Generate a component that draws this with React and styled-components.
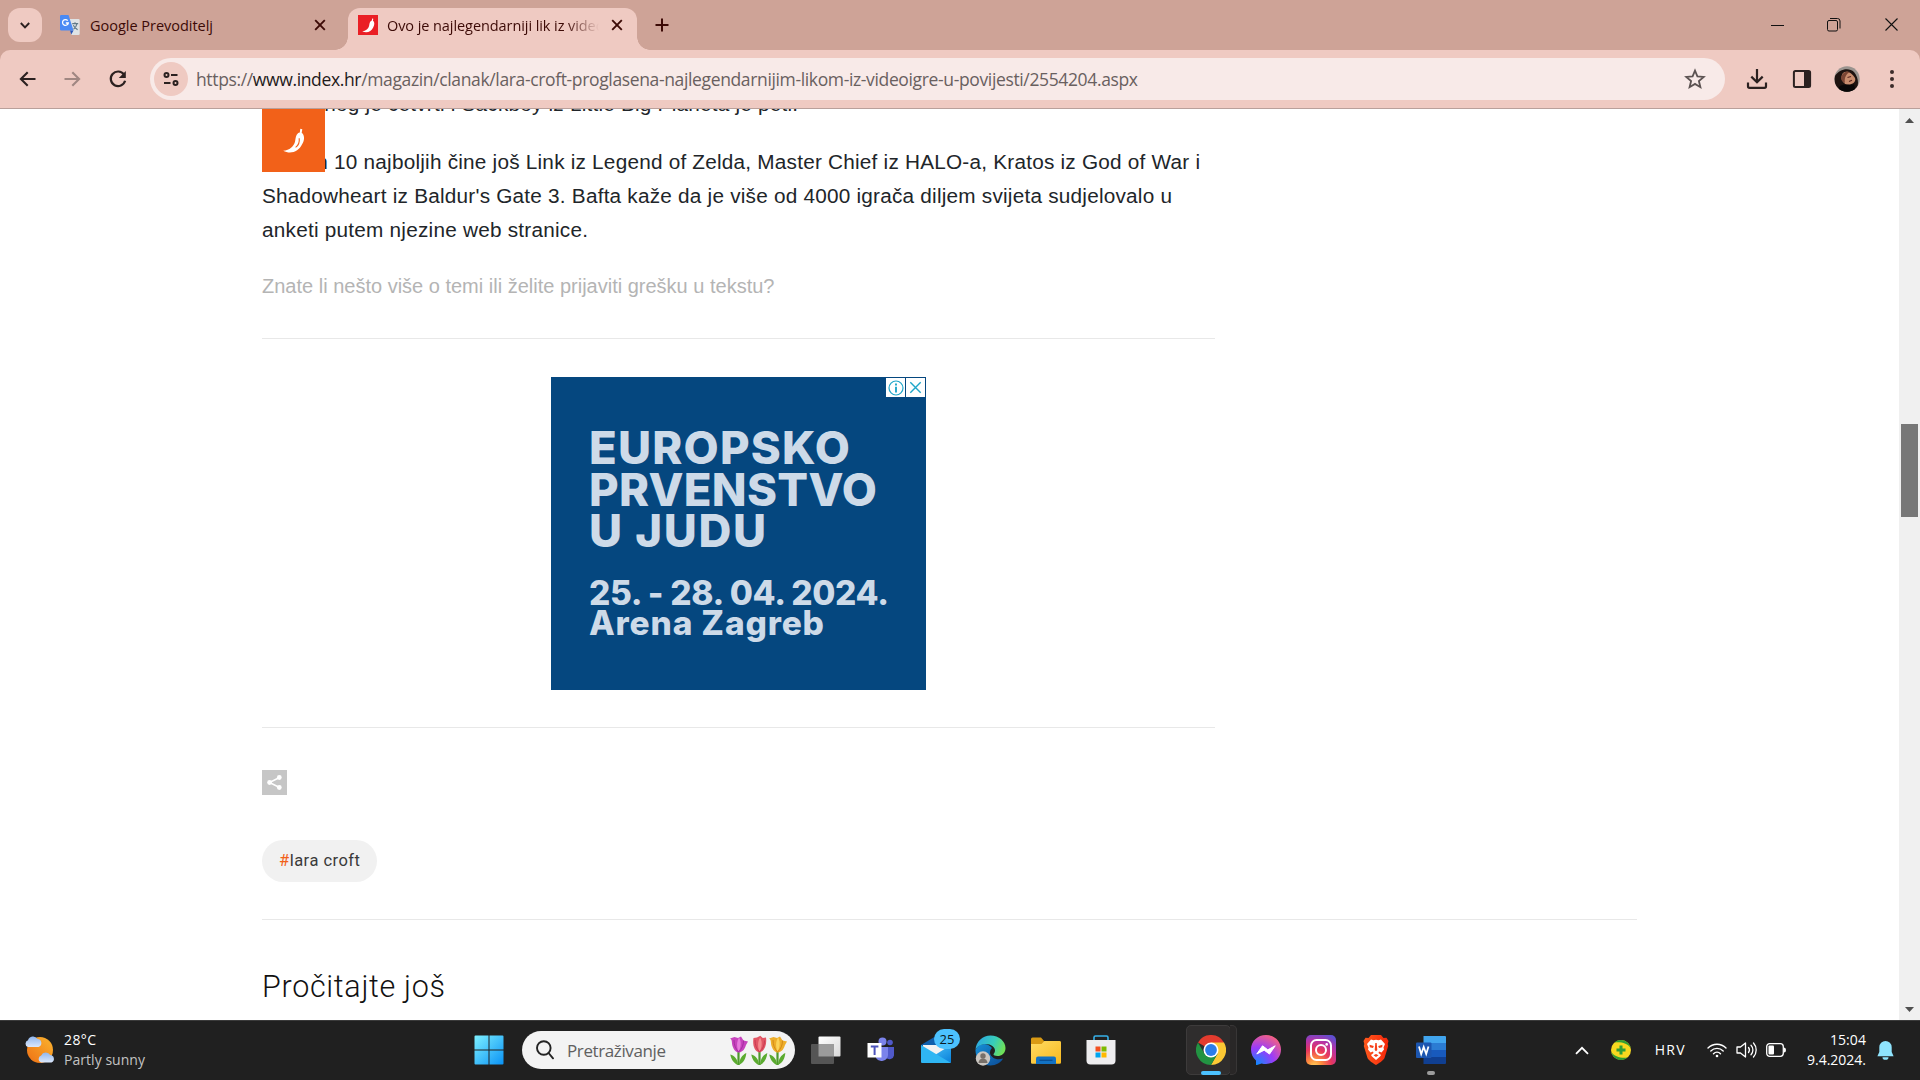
import React, { useLayoutEffect, useRef, useState } from 'react';
import styled, { createGlobalStyle, css } from 'styled-components';

const ui = '"Open Sans", "Noto Sans", sans-serif';

const GlobalStyle = createGlobalStyle`
  *, *::before, *::after { box-sizing: border-box; }
  html, body { margin: 0; padding: 0; overflow: hidden; background: #fff; }
  svg { display: block; flex: none; }
`;

/* ---------- text tracked to a known measure ---------- */
const FitSpan = styled.span`
  display: inline-block;
  white-space: pre;
  flex: none;
`;

function Fit({ width, children }) {
  const ref = useRef(null);
  const [spacing, setSpacing] = useState(null);
  useLayoutEffect(() => {
    const el = ref.current;
    const count = el.textContent.length;
    setSpacing((width - el.getBoundingClientRect().width) / Math.max(1, count - 1));
  }, [width]);
  return (
    <FitSpan ref={ref} style={spacing === null ? undefined : { letterSpacing: `${spacing}px` }}>
      {children}
    </FitSpan>
  );
}

/* ---------- window ---------- */
const Window = styled.div`
  width: 1920px;
  height: 1080px;
  display: flex;
  flex-direction: column;
  overflow: hidden;
  background: #fff;
`;

const TabStrip = styled.header`
  height: 50px;
  flex: none;
  display: flex;
  align-items: flex-start;
  padding: 8px 0 0 8px;
  background: #cea397;
  color: #3c0a06;
  font: 400 14.5px/20px ${ui};
`;

const TabSearch = styled.button`
  width: 34px;
  height: 34px;
  border: 0;
  padding: 0;
  border-radius: 12px;
  background: #efcac2;
  display: grid;
  place-items: center;
`;

const Tab = styled.div`
  position: relative;
  height: 42px;
  display: flex;
  align-items: center;
  padding-bottom: 8px;
  ${(p) =>
    p.$active
      ? css`
          width: 289px;
          padding-left: 10px;
          padding-right: 14px;
          border-radius: 12px 12px 0 0;
          background: #efcac2;
          &::before,
          &::after {
            content: '';
            position: absolute;
            bottom: 0;
            width: 13px;
            height: 13px;
          }
          &::before {
            left: -13px;
            background: radial-gradient(circle at 0 0, transparent 12.5px, #efcac2 13px);
          }
          &::after {
            right: -13px;
            background: radial-gradient(circle at 100% 0, transparent 12.5px, #efcac2 13px);
          }
        `
      : css`
          width: 306px;
          padding-left: 18px;
          padding-right: 22px;
        `}
`;

const TabTitle = styled.span`
  flex: 1;
  overflow: hidden;
  margin: 0 8px 0 ${(p) => p.$gap}px;
  padding-top: 1px;
  ${(p) =>
    p.$fade &&
    css`
      mask-image: linear-gradient(to right, #000 178px, transparent 212px);
    `}
`;

const NewTab = styled.span`
  height: 34px;
  display: flex;
  align-items: center;
  margin-left: 18px;
`;

const WindowControls = styled.div`
  margin-left: auto;
  height: 33px;
  display: flex;
  align-items: center;
  gap: 43px;
  padding-right: 21px;
`;

const ToolbarBack = styled.div`
  background: #cea397;
  flex: none;
`;

const Toolbar = styled.div`
  height: 59px;
  display: flex;
  align-items: center;
  border-radius: 10px 10px 0 0;
  border-bottom: 1px solid #b9a09b;
  background: #efcac2;
  padding-left: 17px;
`;

const NavButtons = styled.nav`
  display: flex;
  flex: none;
  gap: 23px;
  width: 133px;
`;

const Omnibox = styled.div`
  flex: none;
  width: 1575px;
  height: 42px;
  border-radius: 21px;
  background: #f8eae8;
  display: flex;
  align-items: center;
  padding: 0 19px 0 4px;
  color: #69605f;
  font: 400 17.5px/24px ${ui};
`;

const SiteInfo = styled.span`
  width: 34px;
  height: 34px;
  border-radius: 50%;
  background: #efcac2;
  display: grid;
  place-items: center;
  margin-right: 8px;
`;

const Host = styled.b`
  font-weight: 400;
  color: #1f1a1a;
`;

const Address = styled.span`
  flex: 1;
  white-space: nowrap;
`;

const ToolbarActions = styled.div`
  display: grid;
  grid-template-columns: repeat(4, 45px);
  place-items: center;
  padding-left: 9.5px;
`;

/* ---------- page ---------- */
const Viewport = styled.main`
  flex: 1;
  min-height: 0;
  display: flex;
  overflow: hidden;
`;

const Page = styled.div`
  position: relative;
  flex: 1;
  overflow: hidden;
  padding-left: 262px;
  background: #fff;
`;

const LogoBadge = styled.div`
  position: absolute;
  left: 262px;
  top: 0;
  width: 63px;
  height: 63px;
  background: #f26119;
  display: grid;
  place-items: center;
`;

const Article = styled.article`
  width: 953px;
  margin-top: -22px;
  font: 400 20.75px/34px "Liberation Sans", Arial, sans-serif;
  color: #212529;
`;

const Paragraph = styled.p`
  margin: 0 0 24px;
  display: flex;
  flex-direction: column;
  align-items: flex-start;
`;

const Question = styled.p`
  margin: -2px 0 0;
  font-size: 20px;
  color: #b4b4b4;
`;

const Rule = styled.hr`
  width: ${(p) => p.$width}px;
  height: 1px;
  border: 0;
  margin: ${(p) => p.$top}px 0 0;
  background: #e8e8e8;
`;

const Ad = styled.section`
  position: relative;
  width: 375px;
  height: 313px;
  margin: 38px 0 0 289px;
  padding: 50px 0 0 38px;
  background: #05477f;
  color: #cddae8;
  font-family: Inter, sans-serif;
`;

const AdTitle = styled.div`
  display: flex;
  flex-direction: column;
  align-items: flex-start;
  font-size: 45.5px;
  font-weight: 800;
  line-height: 41.6px;
`;

const AdDate = styled.div`
  display: flex;
  flex-direction: column;
  align-items: flex-start;
  margin-top: 26px;
  font-size: 33.5px;
  font-weight: 800;
  line-height: 30.4px;
`;

const AdChoices = styled.div`
  position: absolute;
  top: 1px;
  right: 1px;
  display: flex;
  gap: 1px;
`;

const AdButton = styled.span`
  width: 19px;
  height: 19px;
  background: #fff;
  display: grid;
  place-items: center;
`;

const Share = styled.button`
  display: grid;
  place-items: center;
  width: 25px;
  height: 25px;
  border: 0;
  padding: 0;
  margin-top: 42px;
  background: #c6c6c6;
`;

const Tag = styled.a`
  display: flex;
  align-items: center;
  width: 115px;
  height: 42px;
  margin-top: 45px;
  padding: 0 0 0 17px;
  border-radius: 21px;
  background: #f1f1f1;
  color: #3a3a3a;
  font: 400 16.5px/20px Roboto, sans-serif;
`;

const Hash = styled.span`
  color: #f26119;
`;

const Heading = styled.h2`
  margin: 46px 0 0 0;
  font: 300 30.5px/42px Roboto, sans-serif;
  color: #111;
`;

const Scrollbar = styled.aside`
  width: 21px;
  background: #f0f0f0;
  display: flex;
  flex-direction: column;
  align-items: center;
  padding: 9px 0 8px;
`;

const Thumb = styled.div`
  width: 17px;
  height: 93px;
  margin-top: 301px;
  margin-bottom: auto;
  background: #777;
`;

/* ---------- taskbar ---------- */
const Taskbar = styled.footer`
  height: 60px;
  flex: none;
  display: flex;
  align-items: center;
  padding-bottom: 1px;
  background: #202020;
  border-top: 1px solid #3a3a3a;
  color: #fff;
  font: 400 14px/20px ${ui};
`;

const Weather = styled.div`
  width: 461.5px;
  display: flex;
  align-items: center;
  gap: 8px;
  padding-left: 24px;
`;

const Lines = styled.div`
  display: flex;
  flex-direction: column;
  align-items: ${(p) => (p.$end ? 'flex-end' : 'flex-start')};
  margin-top: -1px;
`;

const Muted = styled.span`
  color: #c3c3c3;
`;

const Cell = styled.div`
  position: relative;
  width: 55px;
  height: 58px;
  display: grid;
  place-items: center;
`;

const SearchBox = styled.div`
  width: 273px;
  height: 38px;
  margin: 0 3px 0 5.5px;
  padding: 0 7px 0 14px;
  border-radius: 19px;
  background: #f3f3f3;
  color: #606060;
  display: flex;
  align-items: center;
  font-size: 17px;
`;

const SearchLabel = styled.span`
  flex: 1;
  padding: 1px 0 0 13px;
`;

const Badge = styled.span`
  position: absolute;
  left: 26px;
  top: 8px;
  width: 26px;
  height: 20px;
  border-radius: 10px;
  background: #4cc2ff;
  color: #0b1a24;
  display: grid;
  place-items: center;
  font-size: 13px;
`;

const ActiveApp = styled.div`
  position: relative;
  width: 45px;
  height: 50px;
  margin-right: 5px;
  padding-left: 5px;
  border-radius: 5px;
  border: 1px solid #3d3b3b;
  background: #2f2d2d;
  display: grid;
  place-items: center;
  &::after {
    content: '';
    position: absolute;
    right: -7px;
    top: -1px;
    width: 7px;
    height: 50px;
    border: 1px solid #383636;
    border-left: 0;
    border-radius: 0 5px 5px 0;
    background: #292727;
  }
`;

const Indicator = styled.i`
  position: absolute;
  bottom: 4px;
  left: 50%;
  width: ${(p) => p.$width}px;
  height: 4px;
  margin-left: ${(p) => -p.$width / 2}px;
  border-radius: 2px;
  background: ${(p) => p.$color};
`;

const Tray = styled.div`
  margin-left: auto;
  padding-right: 26px;
  display: flex;
  align-items: center;
`;

const Slot = styled.span`
  margin-left: ${(p) => p.$gap}px;
`;

/* ---------- icons ---------- */
const Chili = ({ size, fill = '#fff', seam }) => (
  <svg width={size} height={size} viewBox="0 0 26 26">
    <path d="M19.3 .8 21.3 1.3 20.7 4.8C23.8 7 23.7 12.2 21.1 16.3 17.8 23.3 10 27 2.2 22.8 8.8 22.3 12.7 18.6 14 13.8 14.8 10.2 14.6 7.2 17.2 5.1L18.8 4.4Z" fill={fill} />
    {seam && <path d="M18.2 10.2C18.7 14.5 17 17.8 14.6 19.4" fill="none" stroke={seam} strokeWidth="1.1" />}
  </svg>
);

const Cross = ({ size = 12, width = 1.9, color = '#3c0a06' }) => (
  <svg width={size} height={size} viewBox="0 0 12 12" stroke={color} strokeWidth={width}>
    <path d="M1.2 1.2 10.8 10.8M10.8 1.2 1.2 10.8" />
  </svg>
);

const TranslateIcon = () => (
  <svg width="20" height="20" viewBox="0 0 20 20">
    <path d="M8 4h10.5A1.3 1.3 0 0 1 19.700 5.300V18.700a1.200 1.200 0 0 1-1.200 1.200H11.500Z" fill="#dfe3e6" />
    <path d="M1.200 0H8.500L13.500 15.500H1.200A1.200 1.200 0 0 1 0 14.300V1.200A1.200 1.200 0 0 1 1.200 0Z" fill="#4a8af4" />
    <path d="M10 15.500h3.500L11.300 19.500Z" fill="#2a56b8" />
    <path d="M7.700 5.600A2.900 2.900 0 1 0 8.300 8H5.800" fill="none" stroke="#fff" strokeWidth="1.300" />
    <path d="M12.200 8.600h6M15 7.200v1.400M17 8.600c-.6 2.800-2 4.500-3.500 5.600M13.300 10.300c.8 1.800 2.500 3.200 4.300 4.500" fill="none" stroke="#607988" strokeWidth="1.100" />
  </svg>
);

const Arrow = ({ flip, color = '#2b2120' }) => (
  <svg width="22" height="22" viewBox="0 0 22 22" fill="none" stroke={color} strokeWidth="2.1">
    {flip ? <path d="M2.500 11H17M10.300 4.200 17.100 11 10.300 17.800" /> : <path d="M18.500 11H4M10.700 4.200 3.900 11 10.700 17.800" />}
  </svg>
);

const Reload = () => (
  <svg width="22" height="22" viewBox="0 0 22 22">
    <path d="M17 6.500A7.300 7.300 0 1 0 18.100 12.800" fill="none" stroke="#2b2120" strokeWidth="2.200" />
    <path d="M18.800 3v7h-7Z" fill="#2b2120" />
  </svg>
);

const Tune = () => (
  <svg width="18" height="16" viewBox="0 0 18 16" fill="none" stroke="#2b2120" strokeWidth="2">
    <circle cx="4.500" cy="4" r="2" />
    <path d="M9 4h6.500M2 12h6.500" />
    <circle cx="13.500" cy="12" r="2" />
  </svg>
);

const Star = () => (
  <svg width="22" height="22" viewBox="0 0 22 22">
    <path d="M11 2.600 13.400 8.400 19.700 8.900 14.900 13 16.400 19.200 11 15.900 5.600 19.200 7.100 13 2.300 8.900 8.600 8.400Z" fill="none" stroke="#5c5352" strokeWidth="1.800" />
  </svg>
);

const Download = () => (
  <svg width="22" height="22" viewBox="0 0 22 22" fill="none" stroke="#2b2120" strokeWidth="2.200">
    <path d="M11 1v13M5.300 8.600 11 14.200 16.700 8.600M2 14.500V18.300a1.500 1.500 0 0 0 1.500 1.500h15a1.500 1.500 0 0 0 1.500-1.500V14.500" />
  </svg>
);

const SidePanel = () => (
  <svg width="20" height="20" viewBox="0 0 20 20">
    <rect x="1.900" y="1.900" width="16.200" height="16.200" rx="1.500" fill="none" stroke="#2b2120" strokeWidth="2" />
    <path d="M12 2h6v16h-6Z" fill="#2b2120" />
  </svg>
);

const Avatar = () => (
  <svg width="26" height="26" viewBox="0 0 26 26">
    <defs>
      <clipPath id="face"><circle cx="13" cy="13" r="12.700" /></clipPath>
    </defs>
    <g clipPath="url(#face)">
      <rect width="26" height="26" fill="#9a948f" />
      <path d="M1 10C5 3 15 1 20 6 24 11 25 17 23 22L20 26H2C3 20-1 15 1 10Z" fill="#1d1310" />
      <path d="M9 7C13 4 18 7 21 12 22.500 16 18 19 13 18.500 8 17.500 6 11 9 7Z" fill="#c98d6e" />
      <path d="M8 9C10 6 13 4.500 16 6 12 8 10 12 11 17 7 15 6 12 8 9Z" fill="#7b4634" />
      <path d="M13.500 11.500l3.500-1M15 15.500l3-1.200" stroke="#5c281f" strokeWidth="1.200" />
      <path d="M5 21C9 17 15 20 20 18.500L22 26H4Z" fill="#080707" />
    </g>
  </svg>
);

const Menu = () => (
  <svg width="22" height="20" viewBox="0 0 22 20" fill="#3b2c2a">
    <circle cx="11" cy="3" r="2" /><circle cx="11" cy="10" r="2" /><circle cx="11" cy="17" r="2" />
  </svg>
);

const Caret = ({ down }) => (
  <svg width="9" height="5" viewBox="0 0 9 5"><path d={down ? 'M0 0h9L4.500 5Z' : 'M0 5h9L4.500 0Z'} fill="#505050" /></svg>
);

const WeatherIcon = () => (
  <svg width="32" height="30" viewBox="0 0 32 30">
    <defs>
      <linearGradient id="sun" x1="1" y1="0" x2="0" y2="1"><stop stopColor="#fbb52f" /><stop offset="1" stopColor="#ee6f14" /></linearGradient>
      <linearGradient id="cloud" x2="0" y2="1"><stop stopColor="#8fb6ee" /><stop offset="1" stopColor="#dce8fb" /></linearGradient>
    </defs>
    <circle cx="16" cy="15" r="13" fill="url(#sun)" />
    <path d="M4 12A3.500 3.500 0 0 1 4 5.300 5.200 5.200 0 0 1 13.500 4 4.100 4.100 0 0 1 14.500 12Z" fill="url(#cloud)" />
    <path d="M17 27.500A3.700 3.700 0 0 1 17.200 20.500 5 5 0 0 1 26.200 20 3.900 3.900 0 0 1 27.500 27.500Z" fill="url(#cloud)" />
  </svg>
);

const WindowsIcon = () => (
  <svg width="30" height="30" viewBox="0 0 30 30">
    <defs><linearGradient id="win" x2="1" y2="1"><stop stopColor="#7df0ff" /><stop offset="1" stopColor="#0a92f5" /></linearGradient></defs>
    <path d="M1.500 .5H14.500V14.500H.5V1.500a1 1 0 0 1 1-1ZM15.500 .5H28.500a1 1 0 0 1 1 1V14.500H15.500ZM.5 15.500H14.500V29.500H1.500a1 1 0 0 1-1-1ZM15.500 15.500H29.500V28.500a1 1 0 0 1-1 1H15.500Z" fill="url(#win)" />
  </svg>
);

const Magnifier = () => (
  <svg width="18" height="20" viewBox="0 0 18 20" fill="none" stroke="#232323" strokeWidth="1.900" strokeLinecap="round">
    <circle cx="7.800" cy="8" r="6.800" /><path d="M12.600 13 17 18.300" />
  </svg>
);

const Tulip = ({ x, petals, dark, light, wide }) => (
  <g transform={`translate(${x} 0)`}>
    <path d="M9 16V30" stroke="#4f9a2c" strokeWidth="2.200" />
    <path d="M8.500 30C3.500 28 1.500 23.500 .8 19.500 5 20.500 8.200 24 8.500 30ZM9.500 30C10 24 12.500 20 16.800 18 16.500 23 14 28 9.500 30Z" fill="#5bab2f" />
    <path
      d={wide
        ? 'M.5 3.500C3 4.500 2 8 3.200 11.500 4.500 15 6.500 17.500 9.500 17.500 13.500 17 15.500 13.500 16.500 10L18.500 6.500 14 5.500 11.500 1.500 8.500 3 5 2Z'
        : 'M3 3C1.800 10 4 16.500 9 17.500 14 16.500 16.600 10 15.500 2.500L12.300 3 9.800 .8 6.500 2.500Z'}
      fill={petals}
    />
    <path d="M9.700 2.500C7 6.500 7 12 9 16.500 11.500 12.500 12 7 9.700 2.500Z" fill={light} />
    <path d="M4.500 5C4.500 9.500 6 14 9 17M14 5.500C14 10 12.500 14 9 17" fill="none" stroke={dark} strokeWidth=".9" />
  </g>
);

const Tulips = () => (
  <svg width="60" height="31" viewBox="0 0 60 31">
    <Tulip x={1.500} petals="#c743bd" dark="#9f2c9c" light="#e67bdc" wide />
    <Tulip x={22.500} petals="#e25664" dark="#c63650" light="#f58b8e" />
    <Tulip x={40.500} petals="#eeae2a" dark="#cf8514" light="#fbd35a" wide />
  </svg>
);

const TaskView = () => (
  <svg width="30" height="28" viewBox="0 0 30 28">
    <defs><linearGradient id="tv" x2="1" y2="1"><stop stopColor="#fff" /><stop offset="1" stopColor="#d8d8d8" /></linearGradient></defs>
    <rect x="7.500" y=".5" width="22" height="20" rx="1" fill="url(#tv)" />
    <rect x="0" y="8" width="23" height="20" rx="1" fill="#555" />
    <path d="M7.500 8H23v12.500H7.500Z" fill="#9b9b9b" />
  </svg>
);

const Teams = () => (
  <svg width="28" height="26" viewBox="0 0 28 26">
    <circle cx="23" cy="5.500" r="2.800" fill="#5059c9" /><circle cx="15.500" cy="4.500" r="4" fill="#7b83eb" />
    <path d="M19 10h8V18.500a4.500 4.500 0 0 1-8 2Z" fill="#5059c9" />
    <path d="M9 10H21V18a6.500 6.500 0 0 1-12 3Z" fill="#7b83eb" />
    <rect x=".5" y="6" width="14" height="14.500" fill="#fff" />
    <path d="M3.800 9.500h7.600M7.600 9.500V18" stroke="#4b53bc" strokeWidth="2" />
  </svg>
);

const Mail = () => (
  <svg width="30" height="28" viewBox="0 0 30 28">
    <defs><linearGradient id="mail" x2="1" y2="1"><stop stopColor="#55cdfc" /><stop offset="1" stopColor="#087fda" /></linearGradient></defs>
    <path d="M0 9 15 0 30 9V26H0Z" fill="#0f5fac" />
    <path d="M2 9H28V16L15 20 2 12Z" fill="#f2f2f2" />
    <path d="M30 9V26a1 1 0 0 1-1 1H1L30 9Z" fill="url(#mail)" />
    <path d="M0 9 30 27H1a1 1 0 0 1-1-1Z" fill="#2fb6f3" />
  </svg>
);

const Edge = () => (
  <svg width="31" height="31" viewBox="0 0 31 31">
    <defs>
      <linearGradient id="edgeTop" x1="0" y1=".2" x2="1" y2=".5"><stop stopColor="#2aa5e5" /><stop offset=".6" stopColor="#38cdb9" /><stop offset="1" stopColor="#70e057" /></linearGradient>
      <linearGradient id="edgeLow" x2="1" y2="1"><stop stopColor="#1690d8" /><stop offset="1" stopColor="#0c4b96" /></linearGradient>
    </defs>
    <path d="M.5 15A15 15 0 0 0 15.500 30.500C21 30.500 26 27.500 28 23.500 22 26 15 22.500 15 17.500 15 14.500 17 13 17 13 12 7 4 8 .5 15Z" fill="url(#edgeLow)" />
    <path d="M.5 15C1 6 8 .5 15.500 .5 24 .5 30.500 6.500 30.500 13 30.500 18.500 26.500 21 22.500 21 20 21 18.500 20 18.500 19.500 18.500 18.500 20 18 20 15.500 20 12 16 9 11 9 6 9 2 11.500 .5 15Z" fill="url(#edgeTop)" />
    <circle cx="8" cy="23.500" r="7.200" fill="#cbc7c2" />
    <circle cx="8" cy="21" r="2.700" fill="#77706a" /><path d="M3.500 28a4.500 4.500 0 0 1 9 0Z" fill="#77706a" />
  </svg>
);

const Explorer = () => (
  <svg width="30" height="27" viewBox="0 0 30 27">
    <defs><linearGradient id="fold" x2="1" y2="1"><stop stopColor="#ffdb63" /><stop offset="1" stopColor="#f8b91f" /></linearGradient></defs>
    <path d="M0 2A1.500 1.500 0 0 1 1.500 .5H10L13 4H28a2 2 0 0 1 2 2V12H0Z" fill="#d99a14" />
    <path d="M0 7H10.500L13.500 4H28.500A1.500 1.500 0 0 1 30 5.500V25.500a1.300 1.300 0 0 1-1.300 1.300H1.300A1.300 1.300 0 0 1 0 25.500Z" fill="url(#fold)" />
    <path d="M5 27V21.500A2 2 0 0 1 7 19.500H23a2 2 0 0 1 2 2V27Z" fill="#1272c4" />
    <path d="M8.500 23.300h13" stroke="#0a4d93" strokeWidth="1.300" />
  </svg>
);

const Store = () => (
  <svg width="30" height="30" viewBox="0 0 30 30">
    <path d="M8 6V2.500A1.500 1.500 0 0 1 9.500 1H20.500A1.500 1.500 0 0 1 22 2.500V6" fill="none" stroke="#36b0e8" strokeWidth="1.600" />
    <path d="M.5 5H29.500V25.500a4 4 0 0 1-4 4H4.500a4 4 0 0 1-4-4Z" fill="#eeedef" />
    <path d="M9.500 11.500h5v5h-5Z" fill="#f25022" /><path d="M15.500 11.500h5v5h-5Z" fill="#7fba00" />
    <path d="M9.500 17.500h5v5h-5Z" fill="#00a4ef" /><path d="M15.500 17.500h5v5h-5Z" fill="#ffb900" />
  </svg>
);

const Chrome = () => (
  <svg width="30" height="30" viewBox="0 0 30 30">
    <path d="M15 15 2 7.500A15 15 0 0 1 28 7.500Z" fill="#e33b2e" />
    <path d="M15 7.500H28A15 15 0 0 1 15 30L21.500 18.700Z" fill="#fcc934" />
    <path d="M2 7.500A15 15 0 0 0 15 30L21.500 18.700 8.500 18.700Z" fill="#229342" />
    <circle cx="15" cy="15" r="7.500" fill="#fff" /><circle cx="15" cy="15" r="5.900" fill="#2b7de9" />
  </svg>
);

const Messenger = () => (
  <svg width="30" height="30" viewBox="0 0 30 30">
    <defs><radialGradient id="msg" cx=".2" cy="1" r="1.150"><stop stopColor="#0a8dff" /><stop offset=".5" stopColor="#9a3bfa" /><stop offset="1" stopColor="#ff6574" /></radialGradient></defs>
    <path d="M15 0C23.500 0 30 6.200 30 14.500S23.500 29 15 29C13.500 29 12 28.800 10.600 28.400L6 30C5.300 30.300 5 30 5 29.300V25.500C1.900 22.900 0 19 0 14.500 0 6.200 6.500 0 15 0Z" fill="url(#msg)" />
    <path d="M5.800 19 11.500 10.800 16.800 14.800 24.200 10.800 18.500 19.100 13.200 15.200Z" fill="#fff" stroke="#fff" strokeLinejoin="round" />
  </svg>
);

const Instagram = () => (
  <svg width="30" height="30" viewBox="0 0 30 30">
    <defs>
      <radialGradient id="ig" cx=".28" cy="1.050" r="1.150"><stop stopColor="#ffd45e" /><stop offset=".22" stopColor="#fd8d3d" /><stop offset=".5" stopColor="#e8375d" /><stop offset=".75" stopColor="#b832a5" /><stop offset="1" stopColor="#5f4fd0" /></radialGradient>
    </defs>
    <rect width="30" height="30" rx="5" fill="url(#ig)" />
    <g fill="none" stroke="#fff" strokeWidth="2"><rect x="5" y="5" width="20" height="20" rx="5.500" /><circle cx="15" cy="15" r="5" /></g>
    <circle cx="20.700" cy="9.400" r="1.300" fill="#fff" />
  </svg>
);

const Brave = () => (
  <svg width="26" height="30" viewBox="0 0 26 30">
    <defs><linearGradient id="brave" x2="1" y2="0"><stop stopColor="#ff5a1e" /><stop offset="1" stopColor="#f5260a" /></linearGradient></defs>
    <path d="M8 0H18L20.500 3 23.500 2.700 25.500 6 24.700 9 25.200 11 21.500 23C21 25 15 29 13 30 11 29 5 25 4.500 23L.8 11 1.300 9 .5 6 2.500 2.700 5.500 3Z" fill="url(#brave)" />
    <path d="M8 4.500 10.500 5.200 13 4.800 15.500 5.200 18 4.500 22 9 20.500 12.500 21 14.500 18.500 17.500 16 16.500 15.500 18 18 20 17 21.500 13 25 9 21.500 8 20 10.500 18 10 16.500 7.500 17.500 5 14.500 5.500 12.500 4 9Z" fill="#fff" />
    <path d="M6.500 9.800 10.800 11 10 13 6.800 12.200ZM19.500 9.800 15.200 11 16 13 19.200 12.200ZM12.300 8H13.700L14.300 15 13 16.200 11.700 15ZM10.500 20.300 13 19 15.500 20.300 13 22Z" fill="#f7401a" />
  </svg>
);

const Word = () => (
  <svg width="30" height="28" viewBox="0 0 30 28">
    <path d="M7.500 0H29a1 1 0 0 1 1 1V7H7.500Z" fill="#41a5ee" /><path d="M7.500 7H30v7H7.500Z" fill="#2b7cd3" />
    <path d="M7.500 14H30v7H7.500Z" fill="#185abd" /><path d="M7.500 21H30v6a1 1 0 0 1-1 1H7.500Z" fill="#103f91" />
    <rect y="6.500" width="15.500" height="15.500" rx="1" fill="#1c56b0" />
    <path d="M3 10.500 5.200 18 7.700 11 10.200 18 12.500 10.500" fill="none" stroke="#fff" strokeWidth="1.800" />
  </svg>
);

const Antivirus = () => (
  <svg width="20" height="20" viewBox="0 0 20 20">
    <circle cx="10" cy="10" r="10" fill="#f7d81f" />
    <path d="M3.500 2.400A10 10 0 0 1 19.700 8C17 3.500 10 1.500 3.500 2.400ZM16.500 17.600A10 10 0 0 1 .3 12C3 16.500 10 18.500 16.500 17.600Z" fill="#2f9e35" />
    <path d="M8.500 5.500h3v3h3v3h-3v3h-3v-3h-3v-3h3Z" fill="#2f9e35" />
  </svg>
);

const Wifi = () => (
  <svg width="20" height="16" viewBox="0 0 20 16" fill="none" stroke="#fff" strokeWidth="1.400" strokeLinecap="round">
    <path d="M1 6A12.700 12.700 0 0 1 19 6M3.800 8.900A8.800 8.800 0 0 1 16.200 8.900M6.500 11.700A5 5 0 0 1 13.500 11.700" />
    <circle cx="10" cy="14" r="1.300" fill="#fff" stroke="none" />
  </svg>
);

const Volume = () => (
  <svg width="21" height="18" viewBox="0 0 21 18" fill="none" stroke="#fff" strokeWidth="1.300" strokeLinecap="round" strokeLinejoin="round">
    <path d="M1 6H4.500L9.500 2V16L4.500 12H1ZM12.500 6.500A4 4 0 0 1 12.500 11.500M15 4.200A7 7 0 0 1 15 13.800M17.500 2A10.500 10.500 0 0 1 17.500 16" />
  </svg>
);

const Battery = () => (
  <svg width="20" height="14" viewBox="0 0 20 14">
    <rect x=".7" y=".7" width="16.600" height="12.600" rx="3" fill="none" stroke="#fff" strokeWidth="1.300" />
    <rect x="2.500" y="2.500" width="5.500" height="9" rx="1" fill="#fff" /><path d="M18 4.500q2 0 2 2.500t-2 2.500Z" fill="#fff" />
  </svg>
);

const Bell = () => (
  <svg width="17" height="19" viewBox="0 0 17 19" fill="#8fe4fd">
    <path d="M8.500 0A6.200 6.200 0 0 1 14.700 6.200V11L16.600 15.300H.4L2.300 11V6.200A6.200 6.200 0 0 1 8.500 0ZM5.500 16.200h6a3 2.600 0 0 1-6 0Z" />
  </svg>
);

const apps = [
  { id: 'taskview', Icon: TaskView },
  { id: 'teams', Icon: Teams },
  { id: 'mail', Icon: Mail, badge: '25' },
  { id: 'edge', Icon: Edge },
  { id: 'explorer', Icon: Explorer },
  { id: 'store', Icon: Store },
  { id: 'gap' },
  { id: 'chrome', Icon: Chrome, active: true },
  { id: 'messenger', Icon: Messenger },
  { id: 'instagram', Icon: Instagram },
  { id: 'brave', Icon: Brave },
  { id: 'word', Icon: Word, open: true },
];

const RedIcon = styled.span`
  width: 20px;
  height: 20px;
  display: grid;
  place-items: center;
  background: #ea1f25;
`;

export default function App() {
  return (
    <Window>
      <GlobalStyle />
      <TabStrip>
        <TabSearch>
          <svg width="10" height="7" viewBox="0 0 10 7"><path d="M.8 1 5 5.300 9.200 1" fill="none" stroke="#2b2120" strokeWidth="1.900" /></svg>
        </TabSearch>
        <Tab>
          <TranslateIcon />
          <TabTitle $gap={10}><Fit width={123}>Google Prevoditelj</Fit></TabTitle>
          <Cross />
        </Tab>
        <Tab $active>
          <RedIcon><Chili size={15} /></RedIcon>
          <TabTitle $gap={9} $fade><Fit width={221}>Ovo je najlegendarniji lik iz videoi</Fit></TabTitle>
          <Cross />
        </Tab>
        <NewTab>
          <svg width="14" height="14" viewBox="0 0 14 14"><path d="M7 .5v13M.5 7h13" stroke="#3c0a06" strokeWidth="2" /></svg>
        </NewTab>
        <WindowControls>
          <svg width="14" height="14" viewBox="0 0 14 14"><path d="M1 7.500h13" stroke="#111" /></svg>
          <svg width="14" height="14" viewBox="0 0 14 14" fill="none" stroke="#111">
            <rect x=".5" y="2.500" width="10" height="10.500" rx="1.500" /><path d="M3 .5H10.500A2.500 2.500 0 0 1 13 3v7.500" />
          </svg>
          <Cross size={15} width={0.9} color="#111" />
        </WindowControls>
      </TabStrip>

      <ToolbarBack>
        <Toolbar>
          <NavButtons>
            <Arrow />
            <Arrow flip color="#a08782" />
            <Reload />
          </NavButtons>
          <Omnibox>
            <SiteInfo><Tune /></SiteInfo>
            <Address>
              <Fit width={942}>https://<Host>www.index.hr</Host>/magazin/clanak/lara-croft-proglasena-najlegendarnijim-likom-iz-videoigre-u-povijesti/2554204.aspx</Fit>
            </Address>
            <Star />
          </Omnibox>
          <ToolbarActions>
            <Download />
            <SidePanel />
            <Avatar />
            <Menu />
          </ToolbarActions>
        </Toolbar>
      </ToolbarBack>

      <Viewport>
        <Page>
          <Article>
            <Paragraph>
              <Fit width={536}>Hedgehog je četvrti i Sackboy iz Little Big Planeta je peti.</Fit>
            </Paragraph>
            <Paragraph>
              <Fit width={938}>Ostalih 10 najboljih čine još Link iz Legend of Zelda, Master Chief iz HALO-a, Kratos iz God of War i</Fit>
              <Fit width={910}>Shadowheart iz Baldur's Gate 3. Bafta kaže da je više od 4000 igrača diljem svijeta sudjelovalo u</Fit>
              <Fit width={326}>anketi putem njezine web stranice.</Fit>
            </Paragraph>
            <Question>Znate li nešto više o temi ili želite prijaviti grešku u tekstu?</Question>
          </Article>
          <Rule $width={953} $top={35} />
          <Ad>
            <AdTitle>
              <Fit width={261}>EUROPSKO</Fit>
              <Fit width={288}>PRVENSTVO</Fit>
              <Fit width={177}>U JUDU</Fit>
            </AdTitle>
            <AdDate>
              <Fit width={300}>25. - 28. 04. 2024.</Fit>
              <Fit width={235}>Arena Zagreb</Fit>
            </AdDate>
            <AdChoices>
              <AdButton>
                <svg width="16" height="16" viewBox="0 0 16 16" fill="none" stroke="#1fa6c9">
                  <circle cx="8" cy="8" r="7" strokeWidth="1.200" /><path d="M8 3.500v2M8 6.800V12.500" strokeWidth="1.900" />
                </svg>
              </AdButton>
              <AdButton><Cross size={13} width={1.300} color="#1fa6c9" /></AdButton>
            </AdChoices>
          </Ad>
          <Rule $width={953} $top={37} />
          <Share aria-label="share">
            <svg width="15" height="15" viewBox="0 0 15 15" fill="#fff">
              <path d="M12.500 2.500 2.500 7.500 12.500 12.500" fill="none" stroke="#fff" strokeWidth="1.500" />
              <circle cx="12.300" cy="2.500" r="2.400" /><circle cx="2.600" cy="7.500" r="2.400" /><circle cx="12.300" cy="12.500" r="2.400" />
            </svg>
          </Share>
          <Tag><Fit width={81}><Hash>#</Hash>lara croft</Fit></Tag>
          <Rule $width={1375} $top={37} />
          <Heading><Fit width={183}>Pročitajte još</Fit></Heading>
          <LogoBadge><Chili size={26} seam="#f26119" /></LogoBadge>
        </Page>
        <Scrollbar>
          <Caret />
          <Thumb />
          <Caret down />
        </Scrollbar>
      </Viewport>

      <Taskbar>
        <Weather>
          <WeatherIcon />
          <Lines>
            <Fit width={32}>28°C</Fit>
            <Muted><Fit width={81}>Partly sunny</Fit></Muted>
          </Lines>
        </Weather>
        <Cell><WindowsIcon /></Cell>
        <SearchBox>
          <Magnifier />
          <SearchLabel><Fit width={99}>Pretraživanje</Fit></SearchLabel>
          <Tulips />
        </SearchBox>
        {apps.map(({ id, Icon, badge, active, open }) => (
          <Cell key={id}>
            {active ? <ActiveApp><Icon /></ActiveApp> : Icon && <Icon />}
            {badge && <Badge>{badge}</Badge>}
            {active && <Indicator $width={20} $color="#4cc2ff" />}
            {open && <Indicator $width={8} $color="#9c9c9c" />}
          </Cell>
        ))}
        <Tray>
          <svg width="14" height="9" viewBox="0 0 14 9"><path d="M1 7.800 7 1.800 13 7.800" fill="none" stroke="#fff" strokeWidth="1.800" /></svg>
          <Slot $gap={22}><Antivirus /></Slot>
          <Slot $gap={24}><Fit width={30}>HRV</Fit></Slot>
          <Slot $gap={21}><Wifi /></Slot>
          <Slot $gap={9}><Volume /></Slot>
          <Slot $gap={9}><Battery /></Slot>
          <Slot $gap={21}>
            <Lines $end>
              <Fit width={36}>15:04</Fit>
              <Fit width={59}>9.4.2024.</Fit>
            </Lines>
          </Slot>
          <Slot $gap={11}><Bell /></Slot>
        </Tray>
      </Taskbar>
    </Window>
  );
}
